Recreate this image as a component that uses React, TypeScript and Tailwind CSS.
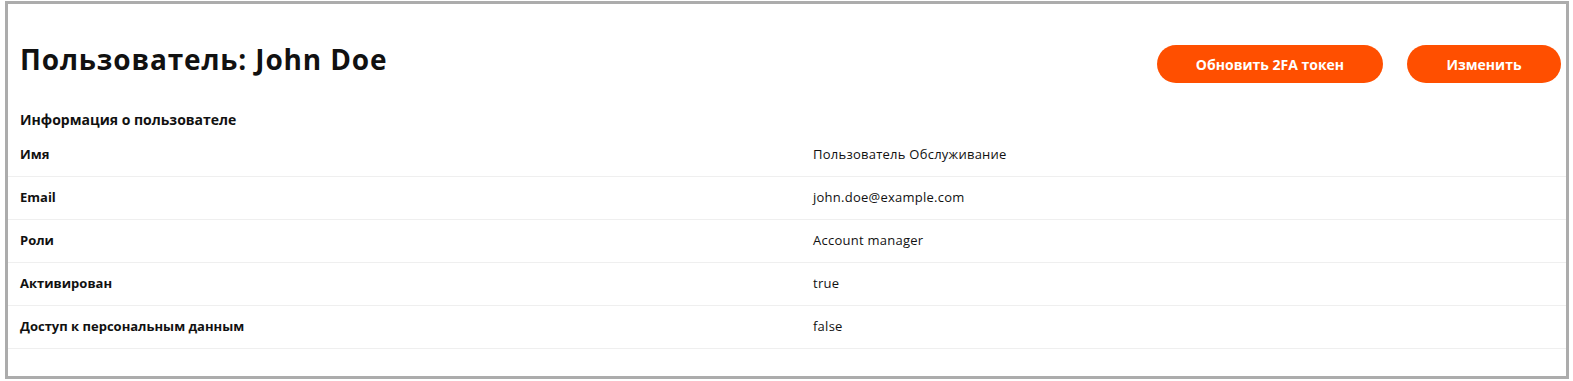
const rows = [
  { label: 'Имя', value: 'Пользователь Обслуживание' },
  { label: 'Email', value: 'john.doe@example.com' },
  { label: 'Роли', value: 'Account manager' },
  { label: 'Активирован', value: 'true' },
  { label: 'Доступ к персональным данным', value: 'false' },
]

export default function App() {
  return (
    <div className="w-[1573px] h-[381px] bg-white pt-px pl-[5px] pr-[4px] pb-[2px] font-['Open_Sans',sans-serif] text-[#111]">
      <div className="h-full border-[3px] border-[#acacac] bg-white">
        <div className="flex items-center justify-between pl-[12px] pr-[5px] pt-[41px]">
          <h1 className="text-[28px] font-bold leading-[38px] tracking-[0.85px] -mt-[10px]">Пользователь: John Doe</h1>
          <div className="flex gap-[24px]">
            <button className="h-[38px] w-[226px] rounded-full bg-[#ff4f00] text-[14px] font-bold text-white">
              Обновить 2FA токен
            </button>
            <button className="h-[38px] w-[154px] rounded-full bg-[#ff4f00] text-[14px] font-bold text-white">
              Изменить
            </button>
          </div>
        </div>
        <div className="mt-[27px] pl-[12px] text-[14px] font-bold leading-[20px]">Информация о пользователе</div>
        <div className="mt-[4px]">
          {rows.map((row) => (
            <div key={row.label} className="grid grid-cols-[793px_1fr] h-[43px] items-center border-b border-[#efefef] text-[13px]">
              <span className="pl-[12px] font-bold">{row.label}</span>
              <span className="pl-[12px] tracking-[0.25px]">{row.value}</span>
            </div>
          ))}
        </div>
      </div>
    </div>
  )
}
